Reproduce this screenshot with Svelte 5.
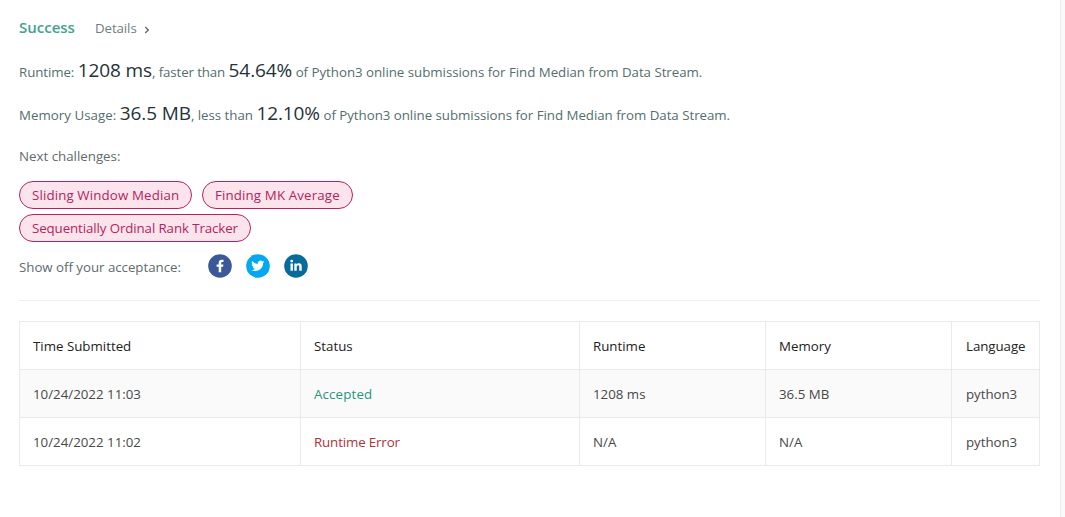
<script>
  const challenges = [
    { title: 'Sliding Window Median', size: 'wide' },
    { title: 'Finding MK Average', size: 'medium' },
    { title: 'Sequentially Ordinal Rank Tracker', size: 'long' }
  ];
  const columns = ['Time Submitted', 'Status', 'Runtime', 'Memory', 'Language'];
  const submissions = [
    { time: '10/24/2022 11:03', status: 'Accepted', ok: true, runtime: '1208 ms', memory: '36.5 MB', language: 'python3' },
    { time: '10/24/2022 11:02', status: 'Runtime Error', ok: false, runtime: 'N/A', memory: 'N/A', language: 'python3' }
  ];
</script>

<main class="panel">
  <header class="result">
    <span class="success">Success</span>
    <span class="details">Details
      <svg width="6" height="8" viewBox="0 0 6 8"><path d="M1.2 .9 4.3 4 1.2 7.1" fill="none" stroke="currentColor" stroke-width="1.3" /></svg>
    </span>
  </header>

  <p class="metric runtime"><span class="lead">Runtime:</span> <strong>1208 ms</strong><span class="than">, faster than</span> <strong>54.64%</strong> <span class="rest">of Python3 online submissions for Find Median from Data Stream.</span></p>
  <p class="metric memory"><span class="lead">Memory Usage:</span> <strong>36.5 MB</strong><span class="than">, less than</span> <strong>12.10%</strong> <span class="rest">of Python3 online submissions for Find Median from Data Stream.</span></p>

  <p class="next">Next challenges:</p>
  <div class="tags">
    {#each challenges as challenge}
      <span class="tag {challenge.size}">{challenge.title}</span>
    {/each}
  </div>

  <div class="share">
    <span class="caption">Show off your acceptance:</span>
    <div class="icons">
      <svg viewBox="0 0 24 24"><circle cx="12" cy="12" r="11.8" fill="#3b5998" /><path fill="#fff" d="M13.2 18.2v-5.5h1.9l.3-2.3h-2.2V9c0-.7.3-1.1 1.1-1.1h1.2V5.8c-.4-.1-1-.1-1.7-.1-1.9 0-3.1 1-3.1 3v1.7H8.6v2.3h2.1v5.5z" /></svg>
      <svg viewBox="0 0 24 24"><circle cx="12" cy="12" r="11.8" fill="#03a9f0" /><path transform="translate(-1.2 -1) scale(1.09)" fill="#fff" d="M18 8.1c-.4.2-.9.3-1.4.4.5-.3.9-.8 1.1-1.4-.5.3-1 .5-1.6.6a2.5 2.5 0 0 0-4.2 2.3c-2.1-.1-3.9-1.1-5.2-2.6-.7 1.3-.2 2.6.8 3.3-.4 0-.8-.1-1.1-.3 0 1.3.9 2.2 2 2.5-.4.1-.7.1-1.1 0 .3 1 1.2 1.7 2.3 1.7-1 .8-2.2 1.1-3.6 1 3.8 2.4 10.9.3 10.8-6.5.5-.3.9-.6 1.2-1z" /></svg>
      <svg viewBox="0 0 24 24"><circle cx="12" cy="12" r="11.8" fill="#076b9c" /><g fill="#fff"><circle cx="7.7" cy="7.1" r="1.4" /><path d="M6.5 9.4h2.4v7.3H6.5zM10.3 9.4h2.3v1c.4-.7 1.2-1.2 2.3-1.2 2.3 0 2.8 1.5 2.8 3.5v4h-2.4v-3.6c0-.9-.1-1.9-1.2-1.9s-1.4.9-1.4 1.9v3.6h-2.4z" /></g></svg>
    </div>
  </div>

  <section class="history">
    <table>
      <colgroup><col class="c-time" /><col class="c-status" /><col class="c-value" /><col class="c-value" /><col /></colgroup>
      <thead>
        <tr>{#each columns as column}<th>{column}</th>{/each}</tr>
      </thead>
      <tbody>
        {#each submissions as row}
          <tr>
            <td>{row.time}</td>
            <td class={row.ok ? 'accepted' : 'error'}>{row.status}</td>
            <td>{row.runtime}</td>
            <td>{row.memory}</td>
            <td>{row.language}</td>
          </tr>
        {/each}
      </tbody>
    </table>
  </section>
</main>

<style>
  :global(body) { margin: 0; background: #fafafa; }
  .panel {
    box-sizing: border-box;
    width: 1061px;
    height: 517px;
    padding: 16px 20px 0 19px;
    border-right: 1px solid #ececec;
    background: #fff;
    color: #546e6e;
    font: 13.3px/24px "Open Sans", "Noto Sans", sans-serif;
    overflow: hidden;
  }
  .result { display: flex; gap: 20px; height: 24px; }
  .success { height: 24px; margin-top: -1px; color: #43a291; font-size: 15px; font-weight: 600; }
  .details { display: flex; align-items: center; gap: 7px; color: #6c8082; letter-spacing: -.08px; }
  .details svg { margin-top: 4px; color: #546567; }
  p { margin: 0; white-space: nowrap; }
  .metric { height: 43px; line-height: 43px; }
  .result + .metric { margin-top: 9px; }
  .runtime .lead { letter-spacing: -.08px; }
  .memory .lead { letter-spacing: .03px; }
  .runtime .than { letter-spacing: -.12px; }
  .memory .than { letter-spacing: -.03px; }
  .rest { letter-spacing: -.03px; }
  strong { color: #263238; font-size: 19px; font-weight: 400; letter-spacing: -.1px; }
  .next { margin-top: 9px; color: #616b6d; }
  .tags { display: flex; flex-wrap: wrap; gap: 5px 10px; width: 400px; margin-top: 13px; }
  .tag {
    box-sizing: border-box;
    height: 28px;
    padding: 0 12px;
    border: 1px solid #b5225f;
    border-radius: 14px;
    background: #fce4ec;
    color: #b3245f;
    line-height: 26px;
    white-space: nowrap;
  }
  .wide { width: 173px; letter-spacing: .13px; }
  .medium { width: 151px; letter-spacing: .14px; }
  .long { width: 232px; letter-spacing: -.1px; }
  .share { display: flex; height: 24px; margin-top: 13px; color: #616b6d; }
  .caption { width: 189px; letter-spacing: -.03px; }
  .icons { display: flex; gap: 14px; margin-top: -1px; }
  .icons svg { width: 24px; height: 24px; }
  .history { margin-top: 21px; padding-top: 20px; border-top: 1px solid #eee; }
  table { width: 1021px; border-collapse: collapse; table-layout: fixed; }
  .c-time { width: 281px; }
  .c-status { width: 279px; }
  .c-value { width: 186px; }
  th, td { height: 47px; padding: 0 0 0 13px; border: 1px solid #eaeaea; text-align: left; font-weight: 400; white-space: nowrap; }
  th:last-child, td:last-child { padding-left: 14px; letter-spacing: -.05px; }
  th { color: #222; }
  td { color: #484848; }
  tbody tr:nth-child(odd) { background: #fafafa; }
  td.accepted { color: #26957f; letter-spacing: .15px; }
  td.error { color: #a9343b; letter-spacing: -.13px; }
</style>
